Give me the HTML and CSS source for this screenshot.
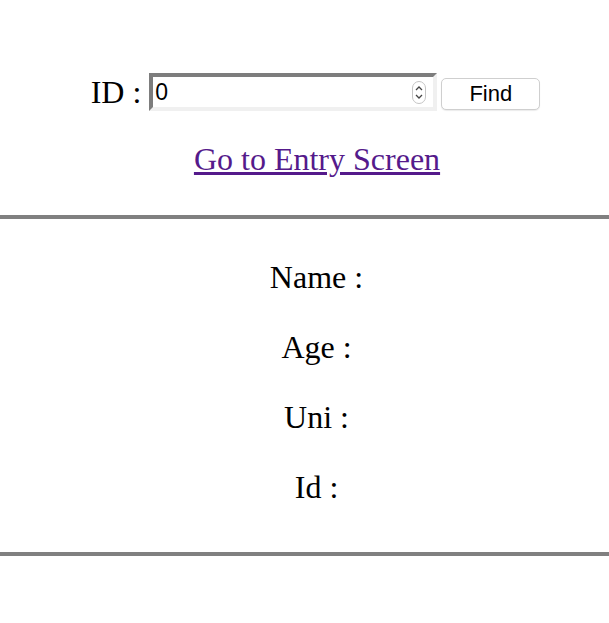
FILE: index.html
```html
<!DOCTYPE html>
<html>
<head>
<meta charset="utf-8">
<link rel="stylesheet" href="styles.css">
</head>
<body>
<div class="top">
  <div class="search">
    <span class="label">ID :</span>
    <div class="field">
      <input class="num" type="text" value="0">
      <svg class="spin" width="14" height="23" viewBox="0 0 14 23">
        <rect x="0.5" y="0.5" width="13" height="22" rx="6.5" fill="#fff" stroke="#c4c4c4"/>
        <path d="M4 9 L7 6 L10 9" fill="none" stroke="#444" stroke-width="1.3"/>
        <path d="M4 14 L7 17 L10 14" fill="none" stroke="#444" stroke-width="1.3"/>
      </svg>
    </div>
    <button class="find">Find</button>
  </div>
  <a class="link" href="#">Go to Entry Screen</a>
</div>
<div class="rule"></div>
<div class="details">
  <div class="row">Name :</div>
  <div class="row">Age :</div>
  <div class="row">Uni :</div>
  <div class="row">Id :</div>
</div>
<div class="rule rule-bottom"></div>
</body>
</html>
```
FILE: styles.css
```css
html, body {
  margin: 0;
  padding: 0;
  background: #fff;
}
body {
  font-family: "Liberation Serif", "Times New Roman", serif;
  font-size: 32px;
  color: #000;
}
.top {
  padding: 73px 0 0 22px;
  display: flex;
  flex-direction: column;
  align-items: center;
}
.search {
  display: flex;
  align-items: center;
  height: 38px;
}
.label {
  line-height: 37px;
  margin-right: 8px;
}
.field {
  box-sizing: border-box;
  width: 288px;
  height: 38px;
  border-style: solid;
  border-width: 4px;
  border-color: #7d7d7d #f0f0f0 #f0f0f0 #7d7d7d;
  background: #fff;
  display: flex;
  align-items: center;
  padding: 0 7px 0 2px;
}
.num {
  flex: 1;
  min-width: 0;
  border: 0;
  outline: none;
  padding: 0;
  margin: 0;
  font-family: "Liberation Sans", Arial, sans-serif;
  font-size: 23px;
  color: #000;
  background: transparent;
}
.spin {
  display: block;
  flex: none;
}
.find {
  align-self: flex-start;
  margin: 5px 0 0 4px;
  box-sizing: border-box;
  width: 99px;
  height: 32px;
  border: 1px solid #cfcfcf;
  border-radius: 5px;
  background: #fff;
  box-shadow: 0 1px 1px rgba(0,0,0,0.08);
  font-family: "Liberation Sans", Arial, sans-serif;
  font-size: 22px;
  color: #000;
  padding: 0;
}
.link {
  margin: 30px 0 0 3px;
  line-height: 37px;
  color: #551a8b;
  text-decoration: underline;
}
.rule {
  height: 4px;
  background: #808080;
  margin-top: 37px;
}
.details {
  padding: 40px 0 0 24px;
  display: flex;
  flex-direction: column;
  align-items: center;
  gap: 33px;
}
.row {
  line-height: 37px;
}
.rule-bottom {
  margin-top: 46px;
}
```
